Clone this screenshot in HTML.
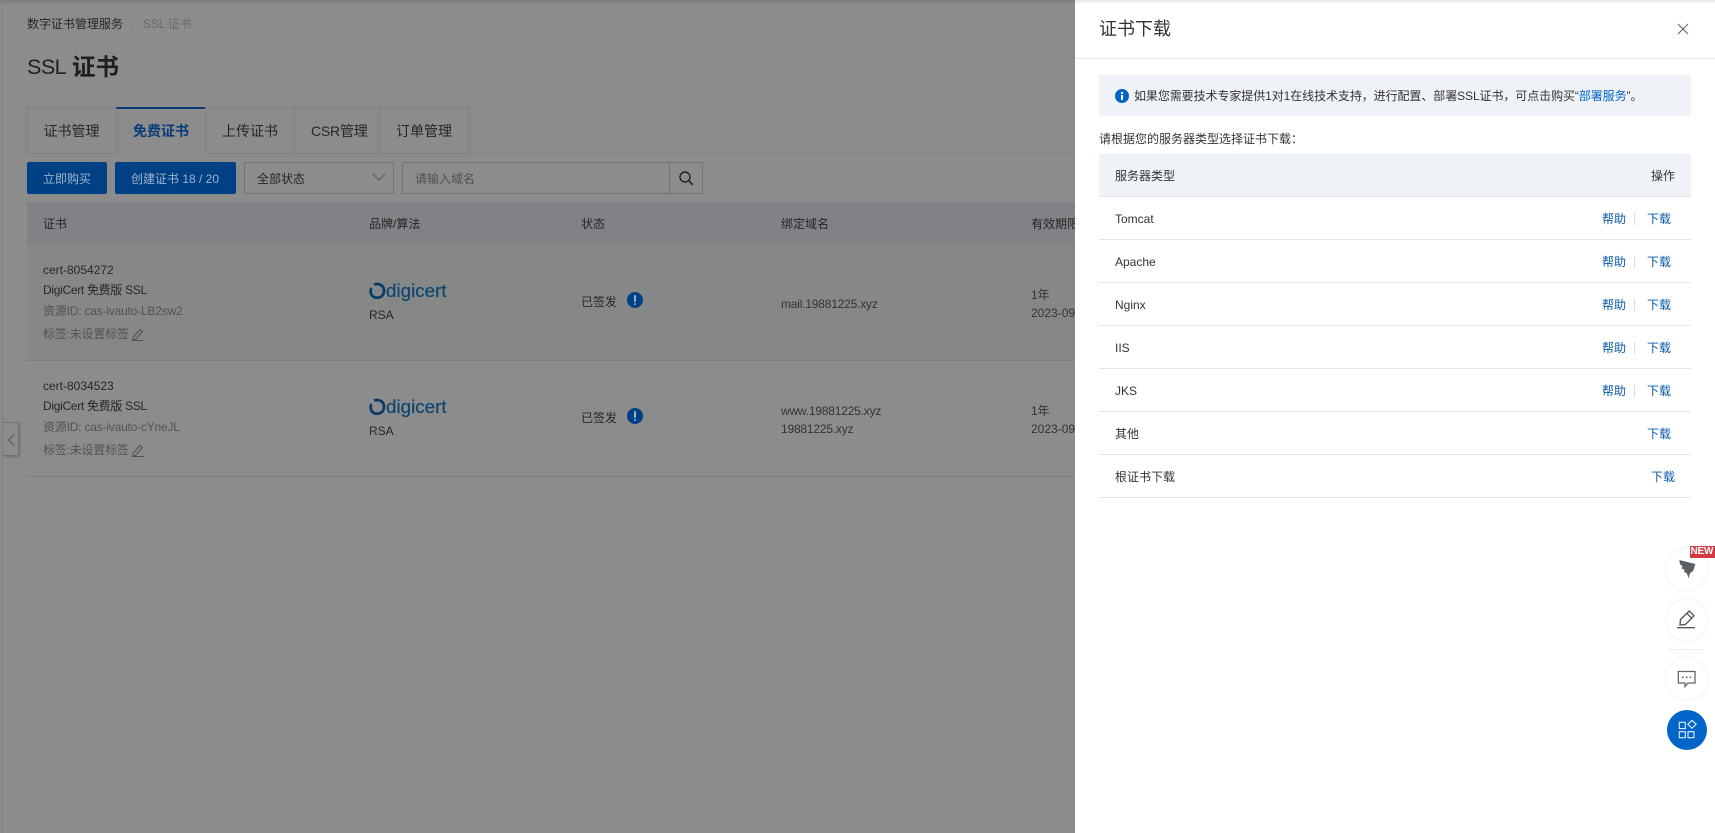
<!DOCTYPE html>
<html lang="zh-CN">
<head>
<meta charset="utf-8">
<title>SSL 证书</title>
<style>
html,body{margin:0;padding:0;width:1715px;height:833px;overflow:hidden;background:#8c8c8c}
body{font-family:"Liberation Sans","Noto Sans CJK SC",sans-serif;font-size:12px;color:#262626;position:relative}
.t{position:absolute;line-height:20px;white-space:nowrap}
.b{position:absolute;box-sizing:border-box}
.gray{color:#505355}
.n{letter-spacing:-.2px}
.l{color:#0a5aa8}
svg{position:absolute;display:block}
</style>
</head>
<body>
<!-- page -->
<div class="b" style="left:0;top:0;width:1075px;height:5px;background:linear-gradient(#7d7d7d,#8c8c8c)"></div>
<div class="b" style="left:2px;top:0;width:1px;height:833px;background:#808080"></div>

<div class="t" style="left:27px;top:14px">数字证书管理服务</div>
<div class="t" style="left:131px;top:14px;color:#7a7a7a">/</div>
<div class="t n" style="left:143px;top:14px;color:#6a6a6a">SSL 证书</div>
<div class="t" style="left:27px;top:52px;font-size:21.5px;line-height:30px;color:#1f1f1f;letter-spacing:-.5px">SSL</div>
<div class="t" style="left:72px;top:52px;font-size:23.5px;line-height:30px;color:#1f1f1f;font-weight:bold">证书</div>

<!-- tabs -->
<div class="b" style="left:27px;top:153px;width:1048px;height:1px;background:#828282"></div>
<div class="b" style="left:27px;top:107px;width:90px;height:47px;border:1px solid #7f7f7f"></div>
<div class="b" style="left:116px;top:107px;width:90px;height:47px;border:1px solid #7f7f7f;border-top:2px solid #083c78;border-bottom:0;background:#8c8c8c"></div>
<div class="b" style="left:205px;top:107px;width:90px;height:47px;border:1px solid #7f7f7f"></div>
<div class="b" style="left:294px;top:107px;width:86px;height:47px;border:1px solid #7f7f7f"></div>
<div class="b" style="left:379px;top:107px;width:90px;height:47px;border:1px solid #7f7f7f"></div>
<div class="t" style="left:43.5px;top:121px;font-size:14px">证书管理</div>
<div class="t" style="left:133px;top:121px;font-size:14px;color:#083c78;font-weight:bold">免费证书</div>
<div class="t" style="left:222px;top:121px;font-size:14px">上传证书</div>
<div class="t n" style="left:311px;top:121px;font-size:14px">CSR管理</div>
<div class="t" style="left:396px;top:121px;font-size:14px">订单管理</div>

<!-- toolbar -->
<div class="b" style="left:27px;top:162px;width:80px;height:32px;background:#004085;border-radius:2px"></div>
<div class="t" style="left:43px;top:169px;color:#9fb4cc">立即购买</div>
<div class="b" style="left:115px;top:162px;width:121px;height:32px;background:#004085;border-radius:2px"></div>
<div class="t" style="left:131px;top:169px;color:#9fb4cc">创建证书 18 / 20</div>
<div class="b" style="left:244px;top:162px;width:150px;height:32px;border:1px solid #727272;border-radius:2px"></div>
<div class="t" style="left:257px;top:169px">全部状态</div>
<svg style="left:372px;top:171px" width="14" height="12" viewBox="0 0 14 12"><path d="M1 3l6 6 6-6" fill="none" stroke="#5a5a5a" stroke-width="1.1"/></svg>
<div class="b" style="left:402px;top:162px;width:301px;height:32px;border:1px solid #727272;border-radius:2px"></div>
<div class="b" style="left:669px;top:162px;width:1px;height:32px;background:#727272"></div>
<div class="t" style="left:415px;top:169px;color:#4f5254">请输入域名</div>
<svg style="left:678px;top:170px" width="16" height="16" viewBox="0 0 16 16"><circle cx="7" cy="7" r="5" fill="none" stroke="#222" stroke-width="1.4"/><path d="M10.8 10.8l4 4" stroke="#222" stroke-width="1.6"/></svg>

<!-- table -->
<div class="b" style="left:27px;top:202px;width:1048px;height:43px;background:#808286"></div>
<div class="t" style="left:43px;top:214px">证书</div>
<div class="t" style="left:369px;top:214px">品牌/算法</div>
<div class="t" style="left:581px;top:214px">状态</div>
<div class="t" style="left:781px;top:214px">绑定域名</div>
<div class="t" style="left:1031px;top:214px">有效期限</div>

<div class="b" style="left:27px;top:245px;width:1048px;height:115px;background:#868887"></div>
<div class="b" style="left:27px;top:360px;width:1048px;height:1px;background:#7b7d7f"></div>
<div class="b" style="left:27px;top:476px;width:1048px;height:1px;background:#7b7d7f"></div>

<div class="t" style="left:43px;top:260px">cert-8054272</div>
<div class="t" style="left:43px;top:280px;letter-spacing:-.3px">DigiCert 免费版 SSL</div>
<div class="t gray n" style="left:43px;top:301px">资源ID: cas-ivauto-LB2sw2</div>
<div class="t gray n" style="left:43px;top:324px">标签:未设置标签</div>
<svg style="left:131px;top:327px" width="14" height="14" viewBox="0 0 14 14"><path d="M2 10.5L9 2.5l2.5 2-7 8-2.7.6z M0.5 13.5h12" fill="none" stroke="#4f5254" stroke-width="1"/></svg>

<div class="t" style="left:43px;top:376px">cert-8034523</div>
<div class="t" style="left:43px;top:396px;letter-spacing:-.3px">DigiCert 免费版 SSL</div>
<div class="t gray n" style="left:43px;top:417px">资源ID: cas-ivauto-cYneJL</div>
<div class="t gray n" style="left:43px;top:440px">标签:未设置标签</div>
<svg style="left:131px;top:443px" width="14" height="14" viewBox="0 0 14 14"><path d="M2 10.5L9 2.5l2.5 2-7 8-2.7.6z M0.5 13.5h12" fill="none" stroke="#4f5254" stroke-width="1"/></svg>

<!-- digicert logos -->
<svg style="left:369px;top:282px" width="17" height="18" viewBox="0 0 17 18"><path d="M5 2.6C7.5 1.5 11 1.8 13 3.8 15.5 6 15.6 10.5 13.8 13 11.8 15.8 7.5 16.5 4.5 14.8 1.6 13 1 8.8 2.3 6" fill="none" stroke="#083a66" stroke-width="2.7"/></svg>
<div class="t" style="left:386px;top:279px;font-size:18.8px;line-height:24px;color:#0e4570;-webkit-text-stroke:.2px #0e4570">digicert</div>
<div class="t" style="left:369px;top:305px">RSA</div>
<svg style="left:369px;top:398px" width="17" height="18" viewBox="0 0 17 18"><path d="M5 2.6C7.5 1.5 11 1.8 13 3.8 15.5 6 15.6 10.5 13.8 13 11.8 15.8 7.5 16.5 4.5 14.8 1.6 13 1 8.8 2.3 6" fill="none" stroke="#083a66" stroke-width="2.7"/></svg>
<div class="t" style="left:386px;top:395px;font-size:18.8px;line-height:24px;color:#0e4570;-webkit-text-stroke:.2px #0e4570">digicert</div>
<div class="t" style="left:369px;top:421px">RSA</div>

<!-- status -->
<div class="t" style="left:581px;top:292px">已签发</div>
<svg style="left:627px;top:292px" width="16" height="16" viewBox="0 0 16 16"><circle cx="8" cy="8" r="8" fill="#004085"/><rect x="7" y="3" width="2" height="7" rx="1" fill="#9fb3c8"/><rect x="7" y="11" width="2" height="2" rx="1" fill="#9fb3c8"/></svg>
<div class="t" style="left:581px;top:408px">已签发</div>
<svg style="left:627px;top:408px" width="16" height="16" viewBox="0 0 16 16"><circle cx="8" cy="8" r="8" fill="#004085"/><rect x="7" y="3" width="2" height="7" rx="1" fill="#9fb3c8"/><rect x="7" y="11" width="2" height="2" rx="1" fill="#9fb3c8"/></svg>

<div class="t n" style="left:781px;top:294px;color:#333">mail.19881225.xyz</div>
<div class="t n" style="left:781px;top:401px;color:#333">www.19881225.xyz</div>
<div class="t n" style="left:781px;top:419px;color:#333">19881225.xyz</div>
<div class="t" style="left:1031px;top:285px;color:#333">1年</div>
<div class="t" style="left:1031px;top:303px;color:#333">2023-09-01</div>
<div class="t" style="left:1031px;top:401px;color:#333">1年</div>
<div class="t" style="left:1031px;top:419px;color:#333">2023-09-01</div>

<!-- collapse handle -->
<div class="b" style="left:3px;top:422px;width:16px;height:34px;background:#8c8c8c;border:1px solid #727272;border-left:0;box-shadow:1px 1px 2px rgba(0,0,0,.2)"></div>
<svg style="left:6px;top:431px" width="10" height="18" viewBox="0 0 10 18"><path d="M8.5 3.5L2.5 9l6 5.5" fill="none" stroke="#6d6d6d" stroke-width="1.8"/></svg>

<!-- drawer -->
<div class="b" style="left:1075px;top:0;width:640px;height:833px;background:#fff"></div>
<div class="b" style="left:1075px;top:0;width:640px;height:4px;background:linear-gradient(#e4e4e4,#fff)"></div>
<div class="t" style="left:1099px;top:17px;font-size:18px;line-height:24px;color:#333">证书下载</div>
<svg style="left:1677px;top:23px" width="12" height="12" viewBox="0 0 12 12"><path d="M1 1l10 10M11 1L1 11" stroke="#555" stroke-width=".9"/></svg>
<div class="b" style="left:1075px;top:58px;width:640px;height:1px;background:#e3e5e8"></div>

<div class="b" style="left:1099px;top:75px;width:592px;height:41px;background:#eff3f8"></div>
<svg style="left:1115px;top:89px" width="14" height="14" viewBox="0 0 14 14"><circle cx="7" cy="7" r="7" fill="#0064c8"/><rect x="6" y="6" width="2" height="5" fill="#fff"/><rect x="6" y="3" width="2" height="2" fill="#fff"/></svg>
<div class="t" style="left:1134px;top:86px;color:#333;letter-spacing:-.08px">如果您需要技术专家提供1对1在线技术支持，进行配置、部署SSL证书，可点击购买“<span style="color:#0064c8">部署服务</span>”。</div>

<div class="t" style="left:1099px;top:129px;color:#333">请根据您的服务器类型选择证书下载：</div>

<div class="b" style="left:1099px;top:154px;width:592px;height:43px;background:#eff3f8;border-bottom:1px solid #e3e5e8"></div>
<div class="t" style="left:1115px;top:166px;color:#333">服务器类型</div>
<div class="t" style="left:1651px;top:166px;color:#333">操作</div>

<div class="b" style="left:1099px;top:239px;width:592px;height:1px;background:#e3e5e8"></div>
<div class="b" style="left:1099px;top:282px;width:592px;height:1px;background:#e3e5e8"></div>
<div class="b" style="left:1099px;top:325px;width:592px;height:1px;background:#e3e5e8"></div>
<div class="b" style="left:1099px;top:368px;width:592px;height:1px;background:#e3e5e8"></div>
<div class="b" style="left:1099px;top:411px;width:592px;height:1px;background:#e3e5e8"></div>
<div class="b" style="left:1099px;top:454px;width:592px;height:1px;background:#e3e5e8"></div>
<div class="b" style="left:1099px;top:497px;width:592px;height:1px;background:#e3e5e8"></div>

<div class="t" style="left:1115px;top:209px;color:#333">Tomcat</div>
<div class="t" style="left:1115px;top:252px;color:#333">Apache</div>
<div class="t" style="left:1115px;top:295px;color:#333">Nginx</div>
<div class="t" style="left:1115px;top:338px;color:#333">IIS</div>
<div class="t" style="left:1115px;top:381px;color:#333">JKS</div>
<div class="t" style="left:1115px;top:424px;color:#333">其他</div>
<div class="t" style="left:1115px;top:467px;color:#333">根证书下载</div>

<div class="t l" style="left:1602px;top:209px">帮助</div><div class="b" style="left:1634px;top:213px;width:1px;height:12px;background:#d9dbde"></div><div class="t l" style="left:1647px;top:209px">下载</div>
<div class="t l" style="left:1602px;top:252px">帮助</div><div class="b" style="left:1634px;top:256px;width:1px;height:12px;background:#d9dbde"></div><div class="t l" style="left:1647px;top:252px">下载</div>
<div class="t l" style="left:1602px;top:295px">帮助</div><div class="b" style="left:1634px;top:299px;width:1px;height:12px;background:#d9dbde"></div><div class="t l" style="left:1647px;top:295px">下载</div>
<div class="t l" style="left:1602px;top:338px">帮助</div><div class="b" style="left:1634px;top:342px;width:1px;height:12px;background:#d9dbde"></div><div class="t l" style="left:1647px;top:338px">下载</div>
<div class="t l" style="left:1602px;top:381px">帮助</div><div class="b" style="left:1634px;top:385px;width:1px;height:12px;background:#d9dbde"></div><div class="t l" style="left:1647px;top:381px">下载</div>
<div class="t l" style="left:1647px;top:424px">下载</div>
<div class="t l" style="left:1651px;top:467px">下载</div>

<!-- floating buttons -->
<div class="b" style="left:1667px;top:549px;width:40px;height:40px;border-radius:50%;background:#fff;box-shadow:0 0 6px rgba(0,0,0,.08)"></div>
<svg style="left:1678px;top:560px" width="19" height="19" viewBox="0 0 19 19"><path d="M1.3 0L17.3 4 15.3 10.7 12 13.3 10.7 18.3 8.7 13.3 6 11.7 6.7 10 3.3 8.3 4.7 6.7 2 4z" fill="#5a5f64"/></svg>
<div class="b" style="left:1690px;top:546px;width:25px;height:12px;background:#cf3a45"></div>
<div class="t" style="left:1690.5px;top:546px;font-size:10px;line-height:12px;font-weight:bold;color:#fff;letter-spacing:-.2px">NEW</div>

<div class="b" style="left:1667px;top:600px;width:40px;height:40px;border-radius:50%;background:#fff;box-shadow:0 0 6px rgba(0,0,0,.08)"></div>
<svg style="left:1677px;top:609px" width="20" height="20" viewBox="0 0 20 20"><path d="M12.3 2L17 6.7 8.5 15.5 3 16 3.5 10.5z M10 4.5l4.5 4.7" fill="none" stroke="#5a5a5a" stroke-width="1.4"/><path d="M0 18.7h18" stroke="#5a5a5a" stroke-width="1.4"/></svg>
<div class="b" style="left:1668px;top:649px;width:36px;height:1px;background:#eeeeee"></div>

<div class="b" style="left:1667px;top:659px;width:40px;height:40px;border-radius:50%;background:#fff;box-shadow:0 0 6px rgba(0,0,0,.08)"></div>
<svg style="left:1677px;top:670px" width="20" height="20" viewBox="0 0 20 20"><path d="M1.3 1.5h16.7v11.5h-7l-3 3.5v-3.5h-6.7z" fill="none" stroke="#666" stroke-width="1.3"/><rect x="5" y="6.5" width="1.6" height="1.6" fill="#666"/><rect x="8.8" y="6.5" width="1.6" height="1.6" fill="#666"/><rect x="12.6" y="6.5" width="1.6" height="1.6" fill="#666"/></svg>

<div class="b" style="left:1667px;top:710px;width:40px;height:40px;border-radius:50%;background:#0064c8"></div>
<svg style="left:1677px;top:720px" width="20" height="20" viewBox="0 0 20 20"><g fill="none" stroke="#e6effa" stroke-width="1.1"><rect x="2.3" y="2.3" width="6" height="6.3"/><rect x="2.3" y="11.7" width="6" height="6"/><rect x="11" y="11.7" width="6" height="6"/><path d="M15 .3l4.2 4-4.2 4-4.2-4z"/></g></svg>
</body>
</html>
